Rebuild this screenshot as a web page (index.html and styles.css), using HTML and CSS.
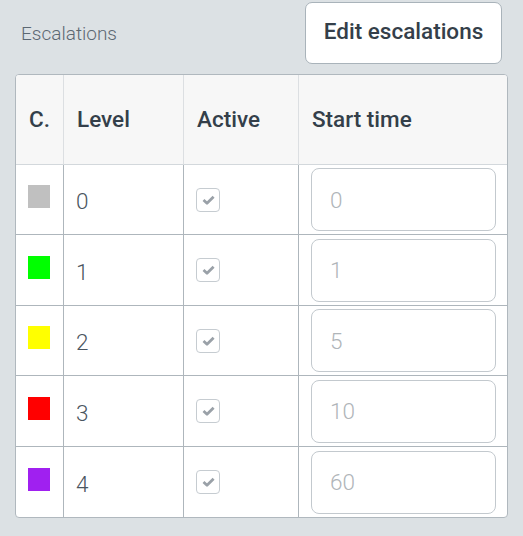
FILE: index.html
```html
<!DOCTYPE html>
<html>
<head>
<meta charset="utf-8">
<link rel="stylesheet" href="styles.css">
</head>
<body>
<div class="top">
  <span class="title">Escalations</span>
  <button class="edit-btn">Edit escalations</button>
</div>
<div class="table">
  <div class="cell head">C.</div>
  <div class="cell head">Level</div>
  <div class="cell head">Active</div>
  <div class="cell head last">Start time</div>

  <div class="cell"><span class="swatch c0"></span></div>
  <div class="cell level">0</div>
  <div class="cell"><span class="check"><svg viewBox="0 0 13 10" width="13" height="10"><path d="M1.5 5 L5 8.2 L11.6 1.8" fill="none" stroke="#9aa1a8" stroke-width="2.8" stroke-linejoin="round"/></svg></span></div>
  <div class="cell last"><div class="input">0</div></div>

  <div class="cell"><span class="swatch c1"></span></div>
  <div class="cell level">1</div>
  <div class="cell"><span class="check"><svg viewBox="0 0 13 10" width="13" height="10"><path d="M1.5 5 L5 8.2 L11.6 1.8" fill="none" stroke="#9aa1a8" stroke-width="2.8" stroke-linejoin="round"/></svg></span></div>
  <div class="cell last"><div class="input">1</div></div>

  <div class="cell"><span class="swatch c2"></span></div>
  <div class="cell level">2</div>
  <div class="cell"><span class="check"><svg viewBox="0 0 13 10" width="13" height="10"><path d="M1.5 5 L5 8.2 L11.6 1.8" fill="none" stroke="#9aa1a8" stroke-width="2.8" stroke-linejoin="round"/></svg></span></div>
  <div class="cell last"><div class="input">5</div></div>

  <div class="cell"><span class="swatch c3"></span></div>
  <div class="cell level">3</div>
  <div class="cell"><span class="check"><svg viewBox="0 0 13 10" width="13" height="10"><path d="M1.5 5 L5 8.2 L11.6 1.8" fill="none" stroke="#9aa1a8" stroke-width="2.8" stroke-linejoin="round"/></svg></span></div>
  <div class="cell last"><div class="input">10</div></div>

  <div class="cell bottom"><span class="swatch c4"></span></div>
  <div class="cell level bottom">4</div>
  <div class="cell bottom"><span class="check"><svg viewBox="0 0 13 10" width="13" height="10"><path d="M1.5 5 L5 8.2 L11.6 1.8" fill="none" stroke="#9aa1a8" stroke-width="2.8" stroke-linejoin="round"/></svg></span></div>
  <div class="cell last bottom"><div class="input">60</div></div>
</div>
</body>
</html>
```
FILE: styles.css
```css
html, body {
  margin: 0;
  padding: 0;
  background: #dce1e4;
  font-family: Roboto, "Liberation Sans", sans-serif;
}
.top {
  display: flex;
  justify-content: space-between;
  align-items: center;
  padding: 2px 21px 0 21px;
  height: 62px;
}
.title {
  font-size: 19px;
  font-weight: 300;
  color: #5c6873;
}
.edit-btn {
  box-sizing: border-box;
  width: 197px;
  height: 62px;
  background: #fff;
  border: 1px solid #a9b3ba;
  border-radius: 7px;
  font-family: Roboto, "Liberation Sans", sans-serif;
  font-size: 22.5px;
  font-weight: 500;
  color: #343f4a;
  padding: 0 0 4px 0;
  margin: 0;
}
.table {
  box-sizing: border-box;
  margin: 10px 0 0 15px;
  width: 493px;
  background: #fff;
  border: 1px solid #b0b8be;
  border-radius: 4px;
  overflow: hidden;
  display: grid;
  grid-template-columns: 48px 120px 115px 1fr;
  grid-template-rows: 90px 70px 71px 70px 71px 70px;
}
.cell {
  box-sizing: border-box;
  border-right: 1px solid #aeb6bc;
  border-bottom: 1px solid #aeb6bc;
  display: flex;
  align-items: center;
  padding-left: 12px;
}
.cell.last { border-right: none; }
.cell.bottom { border-bottom: none; }
.head {
  background: #f7f7f7;
  border-right-color: #dcdfe2;
  border-bottom-color: #d3d8dc;
  font-size: 22.5px;
  font-weight: 500;
  color: #343f4a;
  padding-left: 13px;
  padding-bottom: 2px;
}
.swatch {
  display: block;
  width: 22px;
  height: 23px;
  margin-top: -6px;
}
.c0 { background: #c0c0c0; }
.c1 { background: #00ff00; }
.c2 { background: #ffff00; }
.c3 { background: #ff0000; }
.c4 { background: #a020f0; }
.level {
  font-size: 22.5px;
  font-weight: 300;
  color: #4a5560;
  padding-top: 3px;
}
.check {
  box-sizing: border-box;
  width: 24px;
  height: 24px;
  border: 1px solid #c6ccd1;
  border-radius: 4px;
  display: flex;
  align-items: center;
  justify-content: center;
}
.input {
  box-sizing: border-box;
  width: 185px;
  height: 63px;
  border: 1px solid #c3c9ce;
  border-radius: 8px;
  display: flex;
  align-items: center;
  padding-left: 18px;
  font-size: 22.5px;
  font-weight: 300;
  color: #b0b5b9;
}
```
